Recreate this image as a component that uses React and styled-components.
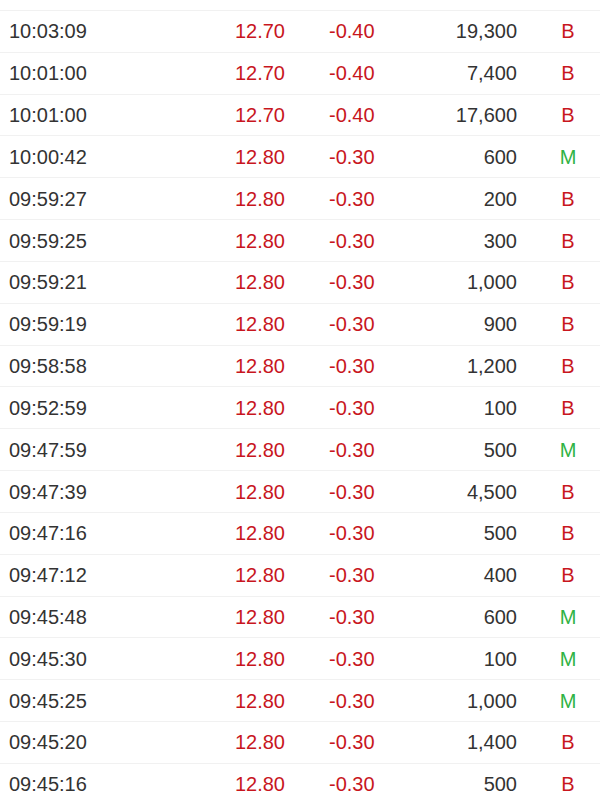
import React from 'react';
import styled, { createGlobalStyle } from 'styled-components';

const GlobalStyle = createGlobalStyle`
    body {
        margin: 0;
        background: #ffffff;
        font-family: "Liberation Sans", Arial, sans-serif;
    }
`;

const Container = styled.div`
    width: 600px;
    height: 800px;
    overflow: hidden;
    padding-top: 10px;
    box-sizing: border-box;
    background: #ffffff;
`;

const Row = styled.div`
    display: grid;
    grid-template-columns: 150px 126px 144px 88px 1fr;
    align-items: center;
    height: 41.83px;
    padding-left: 9px;
    box-sizing: border-box;
    border-top: 1px solid #f1f1f1;
    font-size: 20px;
    line-height: 1;
`;

const Time = styled.span`
    color: #333333;
`;

const Price = styled.span`
    color: #c8161e;
    text-align: right;
`;

const Change = styled.span`
    color: #c8161e;
    padding-left: 44px;
`;

const Volume = styled.span`
    color: #333333;
    text-align: right;
`;

const Flag = styled.span`
    color: ${(props) => (props.type === 'M' ? '#2fb344' : '#c8161e')};
    text-align: center;
    padding-left: 19px;
`;

const trades = [
    ['10:03:09', '12.70', '-0.40', '19,300', 'B'],
    ['10:01:00', '12.70', '-0.40', '7,400', 'B'],
    ['10:01:00', '12.70', '-0.40', '17,600', 'B'],
    ['10:00:42', '12.80', '-0.30', '600', 'M'],
    ['09:59:27', '12.80', '-0.30', '200', 'B'],
    ['09:59:25', '12.80', '-0.30', '300', 'B'],
    ['09:59:21', '12.80', '-0.30', '1,000', 'B'],
    ['09:59:19', '12.80', '-0.30', '900', 'B'],
    ['09:58:58', '12.80', '-0.30', '1,200', 'B'],
    ['09:52:59', '12.80', '-0.30', '100', 'B'],
    ['09:47:59', '12.80', '-0.30', '500', 'M'],
    ['09:47:39', '12.80', '-0.30', '4,500', 'B'],
    ['09:47:16', '12.80', '-0.30', '500', 'B'],
    ['09:47:12', '12.80', '-0.30', '400', 'B'],
    ['09:45:48', '12.80', '-0.30', '600', 'M'],
    ['09:45:30', '12.80', '-0.30', '100', 'M'],
    ['09:45:25', '12.80', '-0.30', '1,000', 'M'],
    ['09:45:20', '12.80', '-0.30', '1,400', 'B'],
    ['09:45:16', '12.80', '-0.30', '500', 'B'],
];

const App = () => {
    return (
        <>
            <GlobalStyle />
            <Container>
                {trades.map(([time, price, change, volume, type], i) => (
                    <Row key={i}>
                        <Time>{time}</Time>
                        <Price>{price}</Price>
                        <Change>{change}</Change>
                        <Volume>{volume}</Volume>
                        <Flag type={type}>{type}</Flag>
                    </Row>
                ))}
            </Container>
        </>
    );
};

export default App;
